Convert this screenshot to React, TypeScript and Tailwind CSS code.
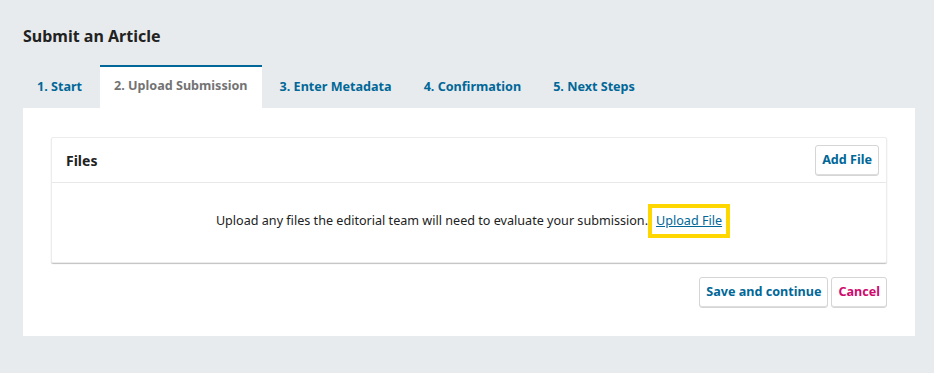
import React from "react";

export default function App() {
  const tabs = ["1. Start", "2. Upload Submission", "3. Enter Metadata", "4. Confirmation", "5. Next Steps"];
  return (
    <div className="min-h-[373px] w-[934px] bg-[#e8ebed] px-[23px] pt-[26px] text-[#222]" style={{ fontFamily: '"Noto Sans", sans-serif' }}>
      <h1 className="h-[20px] text-[16px] font-bold leading-[20px] text-[#222]">Submit an Article</h1>
      <div className="mt-[19px] flex h-[43px] w-[892px] gap-[4px]">
        {tabs.map((t, i) =>
          i === 1 ? (
            <div key={t} className="flex h-[43px] items-center border-t-2 border-[#006798] bg-white px-[14px] pb-[2px] text-[12.6px] font-bold text-[#737373]">
              {t}
            </div>
          ) : (
            <div key={t} className="flex h-[43px] items-center px-[14px] pt-[2px] text-[12.6px] font-bold text-[#006798]">
              {t}
            </div>
          )
        )}
      </div>
      <div className="w-[892px] bg-white px-[28px] pb-[28px] pt-[29px]">
        <div className="rounded-[2px] border border-[#ececec] shadow-[0_1px_1px_rgba(0,0,0,0.25)]">
          <div className="flex h-[45px] items-center justify-between border-b border-[#e8e8e8] pl-[14px] pr-[7px]">
            <span className="text-[14px] font-bold text-[#222]">Files</span>
            <button className="h-[31px] rounded-[3px] border border-[#d5d5d5] bg-white px-[6px] text-[12.6px] font-bold text-[#006798] shadow-[inset_0_-1px_0_#ddd]">
              Add File
            </button>
          </div>
          <div className="flex h-[79px] items-center justify-center pb-[3px] pl-[8px] text-[12.6px] text-[#222]">
            <span>Upload any files the editorial team will need to evaluate your submission.</span>
            <span className="border-4 border-[#ffd700] px-[4px] leading-[26px]">
              <a className="text-[#006798] underline">Upload File</a>
            </span>
          </div>
        </div>
        <div className="mt-[14px] flex justify-end gap-[3px]">
          <button className="h-[31px] rounded-[3px] border border-[#d5d5d5] bg-white px-[6px] text-[12.6px] font-bold text-[#006798] shadow-[inset_0_-1px_0_#ddd]">
            Save and continue
          </button>
          <button className="h-[31px] rounded-[3px] border border-[#d5d5d5] bg-white px-[6px] text-[12.6px] font-bold text-[#d00a6c] shadow-[inset_0_-1px_0_#ddd]">
            Cancel
          </button>
        </div>
      </div>
    </div>
  );
}
